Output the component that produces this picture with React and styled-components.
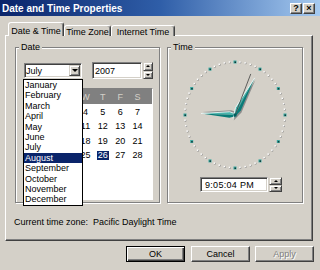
import React from 'react';
import styled, { createGlobalStyle } from 'styled-components';

const GlobalStyle = createGlobalStyle`
  html, body {
    margin: 0;
    padding: 0;
    background: #d4d0c8;
  }
  body {
    font-family: 'Liberation Sans', Arial, sans-serif;
  }
`;

const Window = styled.div`
  width: 320px;
  height: 270px;
  display: flex;
  flex-direction: column;
  background: #d4d0c8;
  font-size: 9px;
  color: #000;
  overflow: hidden;
`;

const TitleBar = styled.div`
  height: 16px;
  flex: none;
  display: flex;
  align-items: center;
  padding: 0 5px 0 2px;
  background: linear-gradient(to right, #0a246a 0%, #2f5ea8 50%, #a6caf0 100%);
  color: #fff;
  font-weight: bold;
  font-size: 10px;
  .title {
    flex: 1;
  }
`;

const CaptionButton = styled.div`
  width: 12px;
  height: 11px;
  box-sizing: border-box;
  margin-left: 1px;
  display: flex;
  align-items: center;
  justify-content: center;
  background: #d4d0c8;
  color: #000;
  font-size: 9px;
  font-weight: bold;
  border: 1px solid;
  border-color: #fff #404040 #404040 #fff;
  box-shadow: inset -1px -1px #808080;
`;

const Body = styled.div`
  flex: 1;
  display: flex;
  flex-direction: column;
  padding: 6px 7px 0 5px;
`;

const TabStrip = styled.div`
  display: flex;
  align-items: flex-end;
  height: 14px;
  padding-left: 3px;
  margin-bottom: -1px;
  position: relative;
  z-index: 1;
`;

const Tab = styled.div`
  width: ${(p) => p.$w}px;
  height: ${(p) => (p.$active ? 14 : 11)}px;
  box-sizing: border-box;
  padding-top: ${(p) => (p.$active ? 3 : 1)}px;
  line-height: 10px;
  text-align: center;
  background: #d4d0c8;
  border: 1px solid;
  border-bottom: none;
  border-color: #fff #404040 transparent #fff;
  border-radius: 3px 3px 0 0;
  box-shadow: inset -1px 0 #808080;
  white-space: nowrap;
`;

const Panel = styled.div`
  width: 308px;
  height: 206px;
  box-sizing: border-box;
  border: 1px solid;
  border-color: #fff #404040 #404040 #fff;
  box-shadow: inset -1px -1px #808080;
  padding: 11px 0 0 9px;
`;

const GroupRow = styled.div`
  display: flex;
  gap: 7px;
`;

const Group = styled.div`
  position: relative;
  width: ${(p) => p.$w}px;
  height: 156px;
  box-sizing: border-box;
  border: 1px solid #808080;
  box-shadow: inset 1px 1px #fff, 1px 1px #fff;
  display: flex;
  flex-direction: column;
  padding-left: ${(p) => p.$pad || 0}px;
`;

const Legend = styled.div`
  align-self: flex-start;
  margin: -6px 0 0 ${(p) => p.$left || 3}px;
  padding: 0 2px;
  line-height: 11px;
  background: #d4d0c8;
`;

const ComboRow = styled.div`
  display: flex;
  align-items: center;
  height: 17px;
  margin-top: 9px;
`;

const Sunken = styled.div`
  box-sizing: border-box;
  background: #fff;
  border: 1px solid;
  border-color: #808080 #fff #fff #808080;
  box-shadow: inset 1px 1px #404040, inset -1px -1px #d4d0c8;
  display: flex;
  align-items: center;
  padding: 2px 1px 2px ${(p) => p.$pad || 2}px;
  width: ${(p) => p.$w}px;
  height: ${(p) => p.$h}px;
  margin-left: ${(p) => p.$ml || 0}px;
  letter-spacing: ${(p) => p.$ls || 0}px;
  .value {
    flex: 1;
    line-height: 10px;
  }
`;

const RaisedButton = styled.div`
  box-sizing: border-box;
  background: #d4d0c8;
  border: 1px solid;
  border-color: #d4d0c8 #404040 #404040 #d4d0c8;
  box-shadow: inset 1px 1px #fff, inset -1px -1px #808080;
  display: flex;
  align-items: center;
  justify-content: center;
  width: ${(p) => p.$w}px;
  height: ${(p) => p.$h}px;
`;

const Arrow = styled.div`
  width: 0;
  height: 0;
  border-left: ${(p) => p.$s}px solid transparent;
  border-right: ${(p) => p.$s}px solid transparent;
  ${(p) =>
    p.$up
      ? `border-bottom: ${Math.ceil(p.$s / 2) + 1}px solid #000;`
      : `border-top: ${Math.ceil(p.$s / 2) + 1}px solid #000;`}
`;

const Spinner = styled.div`
  display: flex;
  flex-direction: column;
  margin-left: 1px;
  width: ${(p) => p.$w}px;
  height: ${(p) => p.$h}px;
  > div {
    flex: 1;
  }
`;

const Calendar = styled.div`
  margin-top: 9px;
  width: 129px;
  height: 112px;
  box-sizing: border-box;
  background: #fff;
  border: 1px solid;
  border-color: #808080 #fff #fff #808080;
`;

const CalHeader = styled.div`
  display: grid;
  grid-template-columns: repeat(7, 17.3px);
  height: 15px;
  align-items: center;
  justify-items: center;
  background: #808080;
  color: #d4d0c8;
`;

const CalDays = styled.div`
  display: grid;
  grid-template-columns: repeat(7, 17.3px);
  grid-auto-rows: 14.5px;
  padding-top: 1px;
  align-items: center;
  justify-items: center;
`;

const Day = styled.span`
  line-height: 9px;
  padding: 0 1px;
  background: ${(p) => (p.$selected ? '#0a246a' : 'transparent')};
  color: ${(p) => (p.$selected ? '#fff' : '#000')};
`;

const MonthList = styled.div`
  position: absolute;
  left: 7px;
  top: 31px;
  width: 60px;
  box-sizing: border-box;
  border: 1px solid #000;
  background: #fff;
  z-index: 2;
`;

const MonthItem = styled.div`
  height: 10.4px;
  line-height: 10.4px;
  padding-left: 1px;
  background: ${(p) => (p.$hover ? '#0a246a' : 'transparent')};
  color: ${(p) => (p.$hover ? '#fff' : '#000')};
`;

const ClockFace = styled.svg`
  display: block;
  margin: 4px auto 0;
`;

const TimeRow = styled.div`
  display: flex;
  margin-top: 4px;
  padding-left: 32px;
`;

const Note = styled.div`
  margin: 14px 0 0 -1px;
  line-height: 11px;
  white-space: pre;
`;

const ButtonRow = styled.div`
  display: flex;
  justify-content: flex-end;
  gap: 5px;
  margin: 5px -1px 0 0;
`;

const DialogButton = styled.div`
  width: 59px;
  height: 16px;
  box-sizing: border-box;
  display: flex;
  align-items: center;
  justify-content: center;
  background: #d4d0c8;
  margin-right: ${(p) => (p.$default ? 1 : 0)}px;
  border: 1px solid;
  border-color: ${(p) => (p.$default ? '#000' : '#fff #404040 #404040 #fff')};
  box-shadow: ${(p) =>
    p.$default
      ? 'inset 1px 1px #fff, inset -1px -1px #404040, inset -2px -2px #808080'
      : 'inset -1px -1px #808080'};
  color: ${(p) => (p.$disabled ? '#808080' : '#000')};
  text-shadow: ${(p) => (p.$disabled ? '1px 1px #fff' : 'none')};
`;

const months = [
  'January', 'February', 'March', 'April', 'May', 'June',
  'July', 'August', 'September', 'October', 'November', 'December',
];

const weekDays = ['S', 'M', 'T', 'W', 'T', 'F', 'S'];
const days = Array.from({ length: 31 }, (_, i) => i + 1);

// clock centre inside the svg
const CX = 60;
const CY = 58;
const RX = 50;
const RY = 53;

const Hand = ({ angle, length, width, tail, lightRight }) => {
  const mid = CY - length * 0.16;
  const tip = `${CX},${CY - length}`;
  const right = `${CX + width},${mid}`;
  const left = `${CX - width},${mid}`;
  const back = `${CX},${CY + tail}`;
  const centre = `${CX},${mid}`;
  const edge = lightRight ? right : left;
  return (
    <g transform={`rotate(${angle} ${CX} ${CY})`}>
      <polygon points={`${tip} ${right} ${back} ${left}`} fill="#8c8c8c" transform="translate(1.5 1.5)" />
      <polygon points={`${tip} ${left} ${back} ${centre}`} fill={lightRight ? '#087c78' : '#48b4ac'} />
      <polygon points={`${tip} ${right} ${back} ${centre}`} fill={lightRight ? '#48b4ac' : '#087c78'} />
      <polyline points={`${tip} ${edge} ${back}`} fill="none" stroke="#f4fcfc" strokeWidth="0.8" />
    </g>
  );
};

const Clock = () => {
  const dots = [];
  for (let i = 0; i < 60; i++) {
    const a = (i * 6 * Math.PI) / 180;
    const x = CX + RX * Math.sin(a);
    const y = CY - RY * Math.cos(a);
    if (i % 5 === 0) {
      dots.push(
        <g key={i}>
          <rect x={x - 1.5} y={y - 1.5} width="3" height="3" fill="#3aa8a0" />
          <rect x={x - 0.5} y={y - 0.5} width="1.5" height="1.5" fill="#103838" />
        </g>
      );
    } else {
      dots.push(
        <g key={i}>
          <rect x={x - 0.5} y={y - 0.5} width="1.5" height="1.5" fill="#808080" />
          <rect x={x - 1} y={y - 1} width="1.5" height="1.5" fill="#fff" />
        </g>
      );
    }
  }
  return (
    <ClockFace width="120" height="116" viewBox="0 0 120 116">
      {dots}
      <Hand angle={272.5} length={34} width={3} tail={4} lightRight />
      <Hand angle={28} length={42} width={3} tail={4} />
      <line
        x1={CX}
        y1={CY}
        x2={CX + 44 * Math.sin((21 * Math.PI) / 180)}
        y2={CY - 44 * Math.cos((21 * Math.PI) / 180)}
        stroke="#404040"
        strokeWidth="0.8"
      />
      <rect x={CX - 1.5} y={CY - 1.5} width="3" height="3" fill="#006060" />
    </ClockFace>
  );
};

const App = () => {
  return (
    <Window>
      <GlobalStyle />
      <TitleBar>
        <div className="title">Date and Time Properties</div>
        <CaptionButton>?</CaptionButton>
        <CaptionButton>×</CaptionButton>
      </TitleBar>
      <Body>
        <TabStrip>
          <Tab $w={56} $active>Date &amp; Time</Tab>
          <Tab $w={47}>Time Zone</Tab>
          <Tab $w={64}>Internet Time</Tab>
        </TabStrip>
        <Panel>
          <GroupRow>
            <Group $w={145} $pad={8}>
              <Legend $left={-5}>Date</Legend>
              <ComboRow>
                <Sunken $w={58} $h={15} $pad={1}>
                  <span className="value">July</span>
                  <RaisedButton $w={11} $h={11}>
                    <Arrow $s={3} />
                  </RaisedButton>
                </Sunken>
                <Sunken $w={50} $h={17} $ml={10} $pad={2}>
                  <span className="value">2007</span>
                </Sunken>
                <Spinner $w={10} $h={17}>
                  <RaisedButton $w={10} $h={8}>
                    <Arrow $s={2} $up />
                  </RaisedButton>
                  <RaisedButton $w={10} $h={8}>
                    <Arrow $s={2} />
                  </RaisedButton>
                </Spinner>
              </ComboRow>
              <Calendar>
                <CalHeader>
                  {weekDays.map((d, i) => (
                    <span key={i}>{d}</span>
                  ))}
                </CalHeader>
                <CalDays>
                  {days.map((d) => (
                    <Day key={d} $selected={d === 26}>
                      {d}
                    </Day>
                  ))}
                </CalDays>
              </Calendar>
              <MonthList>
                {months.map((m) => (
                  <MonthItem key={m} $hover={m === 'August'}>
                    {m}
                  </MonthItem>
                ))}
              </MonthList>
            </Group>
            <Group $w={136}>
              <Legend>Time</Legend>
              <Clock />
              <TimeRow>
                <Sunken $w={68} $h={15} $pad={4} $ls={0.3}>
                  <span className="value">9:05:04 PM</span>
                </Sunken>
                <Spinner $w={13} $h={15}>
                  <RaisedButton $w={13} $h={7.5}>
                    <Arrow $s={2} $up />
                  </RaisedButton>
                  <RaisedButton $w={13} $h={7.5}>
                    <Arrow $s={2} />
                  </RaisedButton>
                </Spinner>
              </TimeRow>
            </Group>
          </GroupRow>
          <Note>{'Current time zone:  Pacific Daylight Time'}</Note>
        </Panel>
        <ButtonRow>
          <DialogButton $default>OK</DialogButton>
          <DialogButton>Cancel</DialogButton>
          <DialogButton $disabled>Apply</DialogButton>
        </ButtonRow>
      </Body>
    </Window>
  );
};

export default App;
